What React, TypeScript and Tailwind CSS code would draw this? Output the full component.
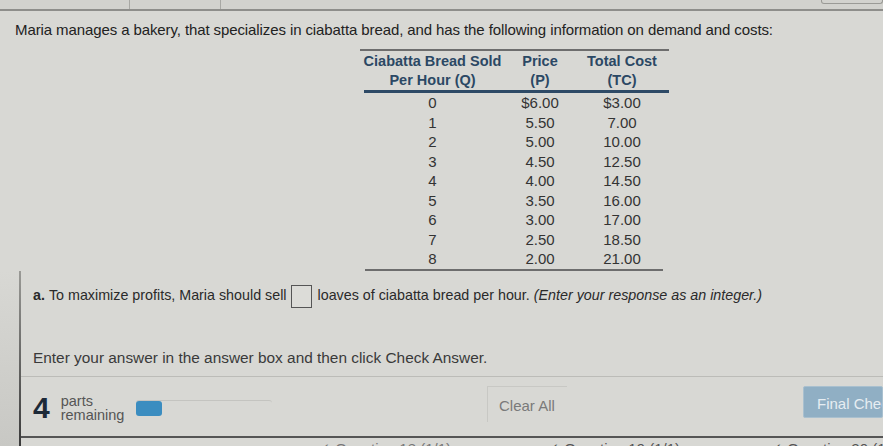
import React from "react";

const rows: [string, string, string][] = [
  ["0", "$6.00", "$3.00"],
  ["1", "5.50", "7.00"],
  ["2", "5.00", "10.00"],
  ["3", "4.50", "12.50"],
  ["4", "4.00", "14.50"],
  ["5", "3.50", "16.00"],
  ["6", "3.00", "17.00"],
  ["7", "2.50", "18.50"],
  ["8", "2.00", "21.00"],
];

export default function App() {
  return (
    <div
      className="w-[883px] h-[446px] overflow-hidden bg-[#d8d8d4] flex flex-col text-[#2a2a2a]"
      style={{ fontFamily: '"Liberation Sans", Arial, sans-serif' }}
    >
      {/* top bar */}
      <div className="h-[11px] shrink-0 flex border-b-2 border-[#8e8e8b] bg-[#d2d2ce]">
        <div className="w-[130px] border-r border-[#a8a8a4]" />
        <div className="w-[91px] border-r border-[#a8a8a4]" />
        <div className="flex-1" />
        <div className="w-[62px] h-[4px] border border-t-0 border-[#9a9a96] rounded-b-[3px]" />
      </div>

      {/* question text */}
      <p className="mt-[10px] ml-[15px] text-[15px] leading-[18px] text-[#222] tracking-[-0.1px]">
        Maria manages a bakery, that specializes in ciabatta bread, and has the following information on demand and costs:
      </p>

      {/* table */}
      <div className="mt-[10px] ml-[360px] w-[309px] flex flex-col">
        <div className="h-[2px] bg-[#6d6d6d]" />
        <div className="flex text-[14.5px] font-bold leading-[19px] text-[#2b4864] pt-[1px]">
          <div className="w-[145px] text-center">
            <div>Ciabatta Bread Sold</div>
            <div>Per Hour (Q)</div>
          </div>
          <div className="w-[70px] text-center">
            <div>Price</div>
            <div>(P)</div>
          </div>
          <div className="w-[94px] text-center">
            <div>Total Cost</div>
            <div>(TC)</div>
          </div>
        </div>
        <div className="h-[3px] bg-[#2e4a66] ml-[4px]" />
        <div className="flex flex-col text-[15px] leading-[19.5px] text-[#333]">
          {rows.map((r) => (
            <div key={r[0]} className="flex">
              <div className="w-[145px] text-center">{r[0]}</div>
              <div className="w-[70px] text-center">{r[1]}</div>
              <div className="w-[94px] text-center">{r[2]}</div>
            </div>
          ))}
        </div>
        <div className="h-[2px] bg-[#6d6d6d] ml-[5px] mr-[6px]" />
      </div>

      {/* lower area */}
      <div className="flex-1 flex">
        <div className="w-[19px] shrink-0 bg-gradient-to-b from-[#d8d8d4] to-[#c8c8c4]" />
        <div className="w-[2px] shrink-0 bg-gradient-to-b from-[#9a9a96] to-[#3a3a3a]" />
        <div className="flex-1 flex flex-col">
          <div className="mt-[14px] ml-[12px] flex items-center text-[14.3px] text-[#2a2a2a] whitespace-nowrap">
            <span className="font-bold">a.</span>
            <span className="ml-[4px]">To maximize profits, Maria should sell</span>
            <div className="ml-[4px] w-[21px] h-[23px] border border-[#555] bg-[#dcdcd8]" />
            <span className="ml-[6px]">loaves of ciabatta bread per hour.</span>
            <span className="ml-[4px] italic">(Enter your response as an integer.)</span>
          </div>

          <div className="mt-[41px] ml-[12px] text-[15.4px] leading-[18px] text-[#3a3a3a] whitespace-nowrap">
            Enter your answer in the answer box and then click Check Answer.
          </div>

          <div className="mt-[9px] border-t border-[#bcbcb8] h-[62px] border-b-2 border-b-[#555] flex items-start">
            <div className="mt-[17px] ml-[12px] flex items-center">
              <span className="text-[30px] font-bold text-[#1d2a38] leading-[28px]">4</span>
              <div className="ml-[11px] flex flex-col text-[14.5px] leading-[14px] text-[#555]">
                <span>parts</span>
                <span>remaining</span>
              </div>
            </div>
            <div className="mt-[23px] ml-[12px] w-[136px] h-[16px] flex rounded-[3px] border-t border-[#c4c4c0]">
              <div className="w-[26px] h-[15px] bg-[#3b8dc0] rounded-[3px]" />
            </div>
            <div className="flex-1" />
            <div className="mt-[9px] w-[80px] h-[36px] border-l border-t border-[#c8c8c4] pt-[8px] pl-[11px] text-[15px] text-[#7a7a7a] whitespace-nowrap">
              Clear All
            </div>
            <div className="w-[236px] shrink-0" />
            <div className="mt-[9px] w-[80px] h-[32px] shrink-0 bg-[#90afc4] border border-[#a9c0cf] rounded-[2px] pl-[13px] pt-[6px] text-[15px] text-[#e6edf2] whitespace-nowrap overflow-hidden">
              Final Check
            </div>
          </div>

          <div className="relative h-[8px] overflow-hidden text-[15px] text-[#555] whitespace-nowrap">
            <span className="absolute left-[297px] top-[0px] text-[#777]">✓ Question 18 (1/1)</span>
            <span className="absolute left-[526px] top-[0px]">✓ Question 19 (1/1)</span>
            <span className="absolute left-[749px] top-[0px]">✓ Question 20 (1/1)</span>
          </div>
        </div>
      </div>
    </div>
  );
}
